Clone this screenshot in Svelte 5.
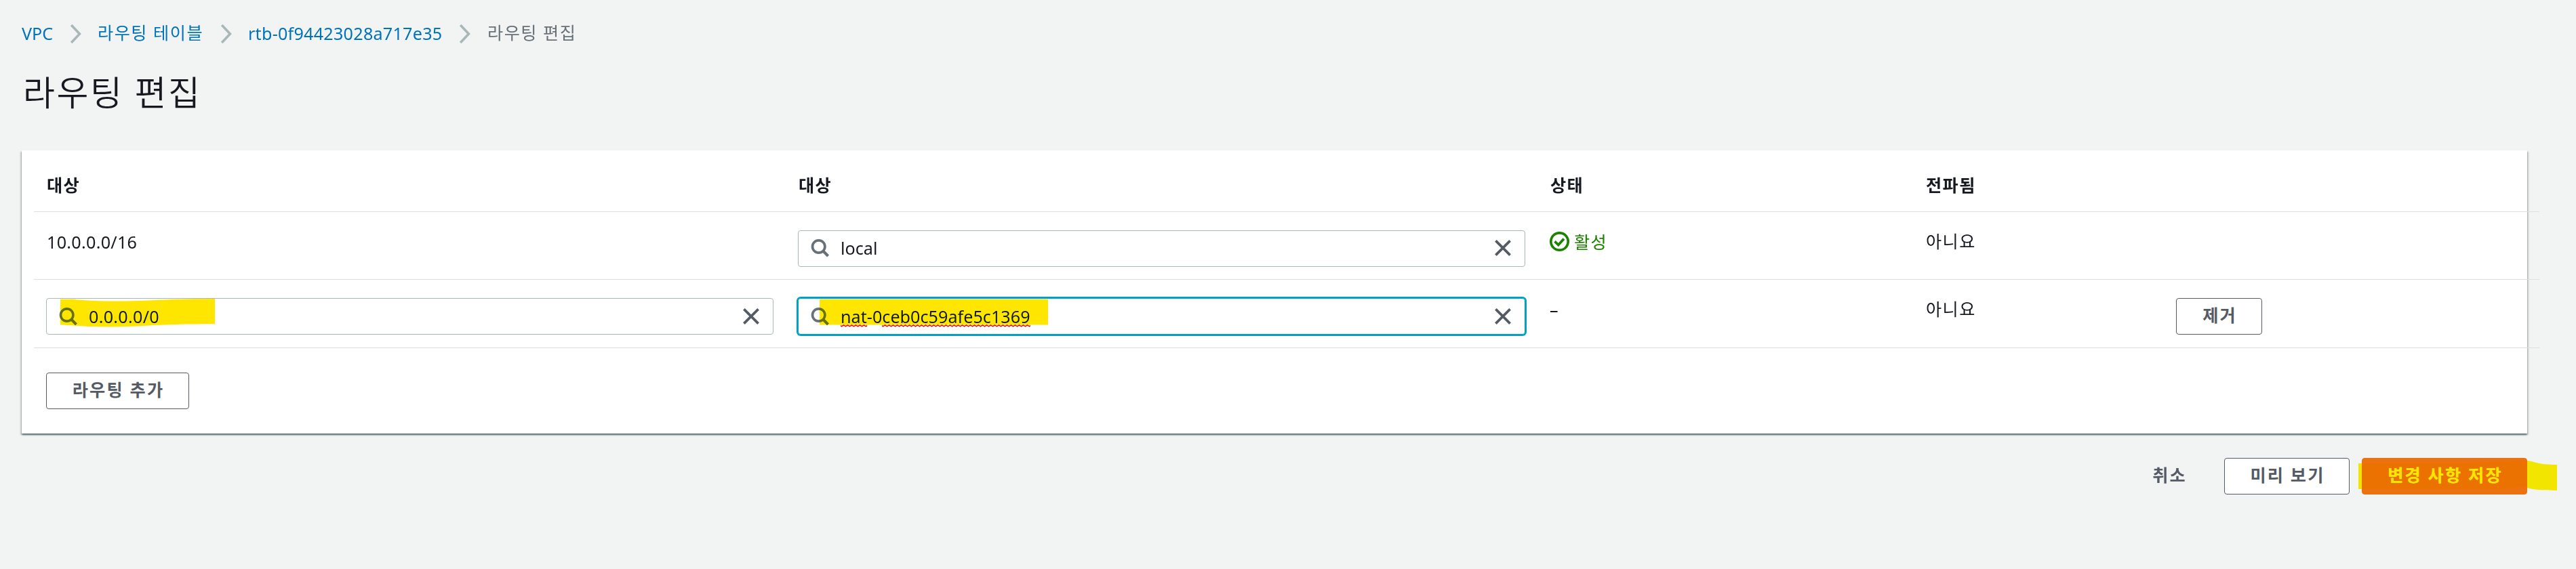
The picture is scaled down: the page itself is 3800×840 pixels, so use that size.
<script>
  const crumbs = [
    { text: 'VPC', cls: 'c1' },
    { text: '라우팅 테이블', cls: 'c2' },
    { text: 'rtb-0f94423028a717e35', cls: 'c3' }
  ];
</script>

{#snippet search()}
  <svg class="search" width="28" height="28" viewBox="0 0 28 28" fill="none" stroke="#687078" stroke-width="3.7">
    <circle cx="11.7" cy="12" r="9.2" />
    <path d="M18 18.3L25.6 25.9" stroke-width="4.2" />
  </svg>
{/snippet}

{#snippet close()}
  <svg class="close" width="26" height="26" viewBox="0 0 26 26" stroke="#545b64" stroke-width="3.8" fill="none">
    <path d="M2.4 2.4L23.6 23.6M23.6 2.4L2.4 23.6" />
  </svg>
{/snippet}

<div class="page">
  <nav>
    {#each crumbs as c}
      <a class={c.cls} href="#top">{c.text}</a>
      <svg width="18" height="28" viewBox="0 0 18 28" fill="none" stroke="#aab7b8" stroke-width="3.6">
        <path d="M2.2 1L14.4 14L2.2 27" />
      </svg>
    {/each}
    <span class="here">라우팅 편집</span>
  </nav>
  <h1>라우팅 편집</h1>

  <section class="panel">
    <div class="row head">
      <div>대상</div><div>대상</div><div>상태</div><div>전파됨</div><div></div>
    </div>
    <div class="row">
      <div class="cell num">10.0.0.0/16</div>
      <div class="field first">{@render search()}<span>local</span>{@render close()}</div>
      <div class="cell ok">
        <svg width="30" height="30" viewBox="0 0 30 30" fill="none" stroke="#1d8102">
          <circle cx="14.5" cy="14.5" r="12.7" stroke-width="3.7" />
          <path d="M7.5 14.4L12.8 19.6L21 10.4" stroke-width="3.7" />
        </svg>
        <span>활성</span>
      </div>
      <div class="cell yn">아니요</div>
      <div></div>
    </div>
    <div class="row last">
      <div class="field">{@render search()}<span class="num">0.0.0.0/0</span>{@render close()}
        <svg class="mark mark-cidr" width="228" height="44" viewBox="0 0 228 44" fill="#ffe600">
          <path d="M0 .7H18C50 4 90 4.2 130 2.6Q180 0 228 0V37.3C180 37.3 150 38.5 120 40.2Q60 43 18 39.5L0 38.3Z" />
        </svg>
      </div>
      <div class="field focus">{@render search()}<span><i>nat</i>-0<i>ceb0c59afe5c1369</i></span>{@render close()}
        <svg class="mark mark-nat" width="337" height="39" fill="#ffe600"><path d="M0 .7H337V38.5H0Z" /></svg>
      </div>
      <div class="cell">–</div>
      <div class="cell yn">아니요</div>
      <div class="act"><button class="rm">제거</button></div>
    </div>
    <button class="add">라우팅 추가</button>
  </section>

  <footer>
    <button class="cancel">취소</button>
    <button class="preview">미리 보기</button>
    <button class="save">변경 사항 저장
      <svg class="mark mark-save" width="293" height="54" viewBox="0 0 293 54" fill="#ffe600">
        <path d="M0 7H130C190 7 225 2.2 249 3C261 4.5 264 9 293 9V47C270 46.6 256 46 249 43C240 39.5 232 45 190 45H0Z" />
      </svg>
    </button>
  </footer>
</div>

<style>
  :global(body) { background: #f2f3f3; }
  .page {
    box-sizing: border-box;
    width: 3800px;
    height: 840px;
    padding: 32px 72px 0 32px;
    background: #f2f3f3;
    color: #16191f;
    font: 400 25.2px/36px "Noto Sans", "Noto Sans CJK KR", sans-serif;
    overflow: hidden;
  }
  nav { display: flex; align-items: center; height: 34px; letter-spacing: 1.5px; white-space: nowrap; }
  nav a { color: #0073bb; text-decoration: none; box-sizing: border-box; }
  nav svg { margin: 1px 0 0; flex: none; }
  .c1 { width: 71px; letter-spacing: 0; }
  .c2 { width: 204px; padding: 0 0 2px 23px; }
  .c3 { width: 334px; padding-left: 23px; letter-spacing: .22px; }
  .here { color: #687078; padding: 0 0 2px 24px; }
  h1 { margin: 32px 0 0 2px; height: 76px; font-size: 51px; line-height: 76px; font-weight: 350; letter-spacing: 2.6px; }
  .panel {
    box-sizing: border-box;
    width: 3696px;
    height: 418px;
    margin-top: 48px;
    padding: 0 0 0 18px;
    background: #fff;
    box-shadow: 0 2px 2px 0 rgba(0, 28, 36, .5), 2px 2px 2px 0 rgba(0, 28, 36, .15), -2px 2px 2px 0 rgba(0, 28, 36, .15);
  }
  .row {
    box-sizing: border-box;
    display: grid;
    grid-template-columns: 1073px 1073px 518px 334px 400px;
    column-gap: 36px;
    width: 3696px;
    height: 100px;
    padding: 27px 0 0 18px;
    border-bottom: 1px solid #dcdfdf;
    letter-spacing: 1.4px;
  }
  .row.last { height: 101px; }
  .head { height: 91px; padding-top: 33px; font-weight: 700; }
  .head div { padding-left: 1px; }
  .cell { margin-top: -1px; }
  .yn { padding-left: 1px; margin-top: -2px; }
  .num { letter-spacing: .25px; }
  .cell.num { padding-left: 1px; }
  .field {
    box-sizing: border-box;
    position: relative;
    display: flex;
    align-items: center;
    height: 54px;
    padding: 0 19px 0 18px;
    border: 1px solid #aab7b8;
    border-radius: 4px;
    background: #fff;
    letter-spacing: 0;
  }
  .first { padding-bottom: 2px; }
  .field span { flex: 1; padding-left: 16px; }
  .field i {
    font-style: normal;
    padding-bottom: 1px;
    background: url("data:image/svg+xml,%3Csvg xmlns='http://www.w3.org/2000/svg' width='6' height='4'%3E%3Cpath d='M-1.5 .9L1.5 2.9L4.5 .9L7.5 2.9' fill='none' stroke='red' stroke-width='1.5'/%3E%3C/svg%3E") repeat-x left bottom 2px;
  }
  .focus { border-color: #00a1c9; box-shadow: 0 0 0 2px #00a1c9; }
  .ok { display: flex; align-items: center; gap: 6px; height: 36px; color: #1d8102; }
  .mark { position: absolute; mix-blend-mode: darken; pointer-events: none; }
  .mark-cidr { left: 20px; top: 0; }
  .mark-nat { left: 31px; top: 0; }
  .mark-save { left: -6px; top: 0; }
  button {
    box-sizing: border-box;
    position: relative;
    height: 54px;
    padding: 0 0 4px 2px;
    border: 1px solid #545b64;
    border-radius: 4px;
    background: #fff;
    color: #545b64;
    font: 700 25.2px/36px "Noto Sans", "Noto Sans CJK KR", sans-serif;
    letter-spacing: 2.2px;
    white-space: nowrap;
  }
  .rm { width: 127px; }
  .add { width: 211px; margin: 36px 0 0 18px; }
  footer { display: flex; justify-content: flex-end; width: 3696px; margin-top: 36px; }
  .cancel { width: 127px; margin-right: 18px; background: none; border-color: transparent; }
  .preview { width: 185px; margin-right: 18px; }
  .save { width: 244px; background: #ec7211; border-color: #ec7211; color: #fff; }
</style>
